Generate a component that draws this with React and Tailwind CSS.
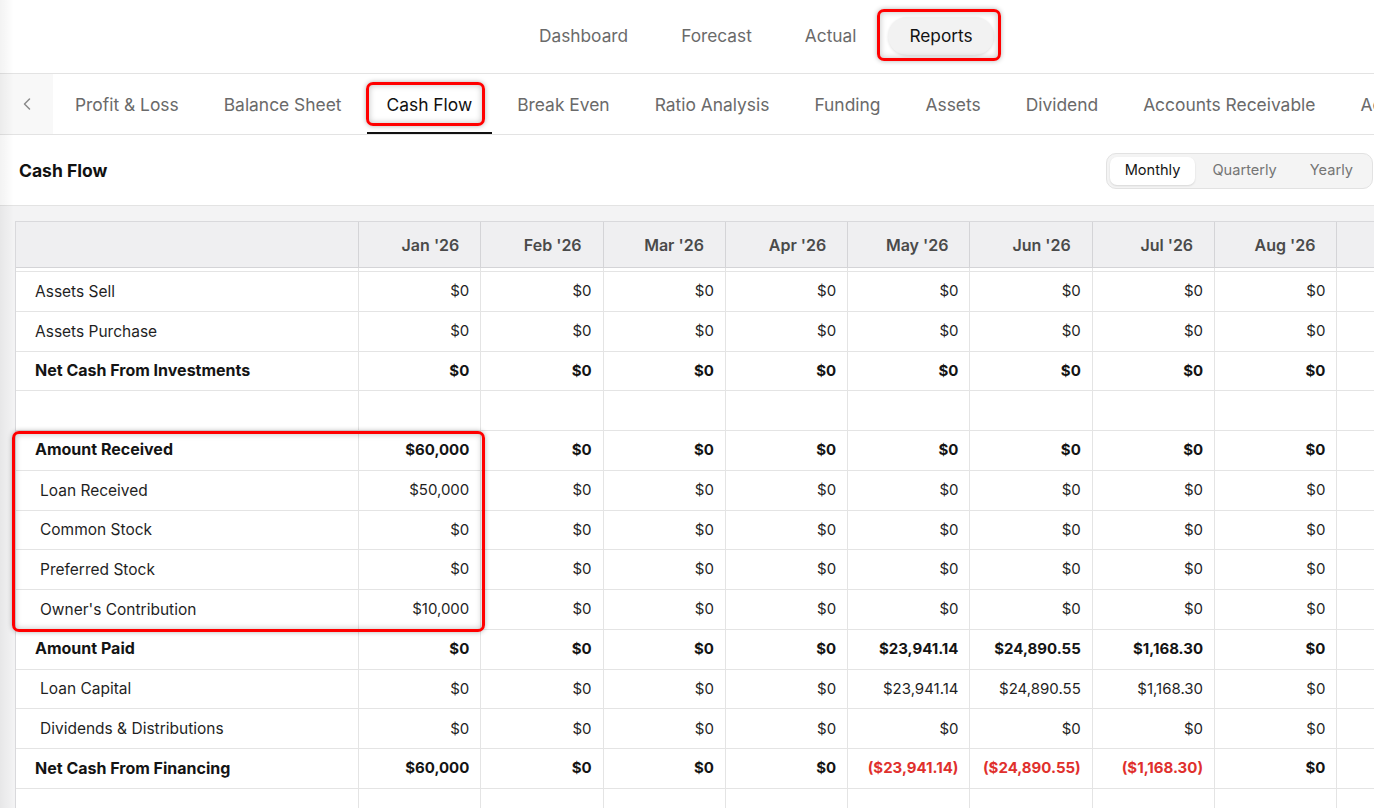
import React from 'react';
import { ChevronLeft } from 'lucide-react';

const MONTHS = ["Jan '26", "Feb '26", "Mar '26", "Apr '26", "May '26", "Jun '26", "Jul '26", "Aug '26", "Sep '26", "Oct '26"];

const z = (n) => Array(n).fill('$0');

// rows of the cash flow table; values in parentheses are shown in red
const ROWS = [
  { label: 'Assets Sell', values: z(10) },
  { label: 'Assets Purchase', values: z(10) },
  { label: 'Net Cash From Investments', bold: true, values: z(10) },
  { empty: true },
  { label: 'Amount Received', bold: true, values: ['$60,000', ...z(9)] },
  { label: 'Loan Received', indent: true, values: ['$50,000', ...z(9)] },
  { label: 'Common Stock', indent: true, values: z(10) },
  { label: 'Preferred Stock', indent: true, values: z(10) },
  { label: "Owner's Contribution", indent: true, values: ['$10,000', ...z(9)] },
  { label: 'Amount Paid', bold: true, values: ['$0', '$0', '$0', '$0', '$23,941.14', '$24,890.55', '$1,168.30', '$0', '$0', '$0'] },
  { label: 'Loan Capital', indent: true, values: ['$0', '$0', '$0', '$0', '$23,941.14', '$24,890.55', '$1,168.30', '$0', '$0', '$0'] },
  { label: 'Dividends & Distributions', indent: true, values: z(10) },
  {
    label: 'Net Cash From Financing', bold: true,
    values: ['$60,000', '$0', '$0', '$0', '($23,941.14)', '($24,890.55)', '($1,168.30)', '$0', '$0', '$0'],
  },
  { empty: true },
];

const TOP_NAV = ['Dashboard', 'Forecast', 'Actual', 'Reports'];
const TABS = ['Profit & Loss', 'Balance Sheet', 'Cash Flow', 'Break Even', 'Ratio Analysis', 'Funding', 'Assets', 'Dividend', 'Accounts Receivable', 'Accounts Payable'];

const GRID = 'grid grid-cols-[342px_repeat(10,122.3px)]';

function Row({ row }) {
  if (row.empty) {
    return (
      <div className={`${GRID} h-[39.77px] border-b border-[#e4e4e4] bg-white`}>
        {Array.from({ length: 11 }).map((_, i) => (
          <div key={i} className={i === 0 ? '' : 'border-l border-[#e4e4e4]'} />
        ))}
      </div>
    );
  }
  return (
    <div className={`${GRID} h-[39.77px] border-b border-[#e4e4e4] bg-white text-[15px]`}>
      <div
        className={`flex items-center whitespace-nowrap ${row.indent ? 'pl-[24px]' : 'pl-[19px]'} ${row.bold ? 'pb-[2px] text-[16px] font-bold text-[#141414]' : 'text-[15.5px] text-[#1f1f1f]'}`}
      >
        {row.label}
      </div>
      {row.values.map((v, i) => (
        <div
          key={i}
          className={`flex items-center justify-end border-l border-[#e4e4e4] pr-[11px] ${row.bold ? 'font-bold' : ''} ${v.startsWith('(') ? 'text-[#e0302d]' : row.bold ? 'text-[#141414]' : 'text-[#1f1f1f]'}`}
        >
          {v}
        </div>
      ))}
    </div>
  );
}

export default function App() {
  return (
    <div className="relative h-[808px] w-[1374px] overflow-hidden bg-white font-['Inter','Liberation_Sans',sans-serif]">
      {/* top nav */}
      <div className="flex h-[74px] items-center gap-[11px] border-b border-[#e3e3e3] pb-[1px] pl-[518px]">
        {TOP_NAV.map((t) => (
          <div
            key={t}
            className={`flex h-[38px] items-center rounded-full px-[21px] text-[17.3px] ${t === 'Reports' ? 'bg-[#f2f2f2] text-[#121212] shadow-[0_1px_3px_rgba(0,0,0,0.12)]' : 'text-[#6a6a6a]'}`}
          >
            {t}
          </div>
        ))}
      </div>

      {/* report tabs */}
      <div className="flex h-[61px] items-stretch border-b border-[#e3e3e3]">
        <div className="flex w-[53px] shrink-0 items-center justify-center bg-[#f8f8f8] text-[#8a8a8a]">
          <ChevronLeft size={20} strokeWidth={1.8} />
        </div>
        <div className="ml-[2px] flex gap-[5px] whitespace-nowrap">
          {TABS.map((t) => (
            <div
              key={t}
              className={`flex items-center px-[20px] pt-[4px] text-[17.4px] ${t === 'Cash Flow' ? 'border-b-2 border-[#111] text-[#111]' : 'border-b-2 border-transparent text-[#6a6a6a]'}`}
            >
              {t}
            </div>
          ))}
        </div>
      </div>

      {/* title + period toggle */}
      <div className="flex h-[71px] items-center justify-between border-b border-[#e3e3e3] pl-[19px] pr-[1px] pt-[2px]">
        <div className="text-[17.5px] font-bold text-[#111]">Cash Flow</div>
        <div className="flex h-[36px] items-center rounded-[10px] border border-[#e2e2e2] bg-[#f4f4f4] p-[3px] text-[14.6px]">
          <div className="flex h-full items-center rounded-[7px] bg-white px-[15px] text-[#151515] shadow-[0_1px_2px_rgba(0,0,0,0.12)]">
            Monthly
          </div>
          <div className="flex h-full items-center px-[17px] text-[#757575]">Quarterly</div>
          <div className="flex h-full items-center px-[16px] text-[#757575]">Yearly</div>
        </div>
      </div>

      {/* table */}
      <div className="h-full bg-[#f3f3f4] pl-[15px] pt-[15px]">
        <div className="w-max border-l border-t border-[#d9d9dc]">
          <div className={`${GRID} h-[46px] border-b border-[#d4d4d7] bg-[#efeff1] text-[16px] font-semibold text-[#4a4a4a]`}>
            <div />
            {MONTHS.map((m) => (
              <div key={m} className="flex items-center justify-end whitespace-nowrap border-l border-[#d4d4d7] pr-[21px]">
                {m}
              </div>
            ))}
          </div>
          <div className={`${GRID} h-[4px] border-b border-[#e4e4e4] bg-white`}>
            {Array.from({ length: 11 }).map((_, i) => (
              <div key={i} className={i === 0 ? '' : 'border-l border-[#e4e4e4]'} />
            ))}
          </div>
          {ROWS.map((r, i) => (
            <Row key={i} row={r} />
          ))}
        </div>
      </div>

      {/* left edge shade */}
      <div className="pointer-events-none absolute left-0 top-0 h-full w-[14px] bg-gradient-to-r from-black/[0.05] to-transparent" />

      {/* red annotation boxes */}
      <div className="pointer-events-none absolute left-[877px] top-[9px] h-[52px] w-[124px] rounded-[7px] border-[3px] border-[#ff0000] shadow-[0_0_5px_rgba(0,0,0,0.3),inset_0_0_6px_rgba(0,0,0,0.25)]" />
      <div className="pointer-events-none absolute left-[366px] top-[82px] h-[44px] w-[119px] rounded-[7px] border-[3px] border-[#ff0000] shadow-[0_0_5px_rgba(0,0,0,0.3),inset_0_0_6px_rgba(0,0,0,0.25)]" />
      <div className="pointer-events-none absolute left-[12px] top-[431px] h-[201px] w-[473px] rounded-[7px] border-[3px] border-[#ff0000] shadow-[0_0_5px_rgba(0,0,0,0.3),inset_0_0_6px_rgba(0,0,0,0.25)]" />
    </div>
  );
}
